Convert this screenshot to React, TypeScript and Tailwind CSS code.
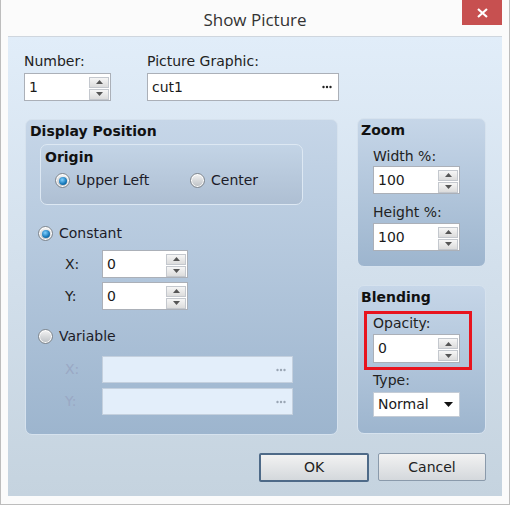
import React from "react";

const font = { fontFamily: '"DejaVu Sans", Verdana, sans-serif' };

function Dots({ disabled }: { disabled?: boolean }) {
  const c = disabled ? "#9aa6b4" : "#222";
  return (
    <svg width="10" height="4" viewBox="0 0 10 4">
      <circle cx="1.5" cy="2" r="1.2" fill={c} />
      <circle cx="5" cy="2" r="1.2" fill={c} />
      <circle cx="8.5" cy="2" r="1.2" fill={c} />
    </svg>
  );
}

function Tri({ up }: { up?: boolean }) {
  return (
    <svg width="7" height="4" viewBox="0 0 7 4">
      <path d={up ? "M0 4 L3.5 0 L7 4 Z" : "M0 0 L7 0 L3.5 4 Z"} fill="#555" />
    </svg>
  );
}

function Spin({ value, w = "w-[87px]", h = "h-[28px]" }: { value: string; w?: string; h?: string }) {
  return (
    <div className={`${w} ${h} flex items-center border border-[#abb0b8] bg-white pl-[4px] pr-[1px]`}>
      <span className="flex-1 text-[14px] text-[#1a1a1a]">{value}</span>
      <div className="flex flex-col gap-px pt-[2px]">
        <div className="w-[20px] h-[11px] flex items-center justify-center border border-[#c4c8ce] bg-gradient-to-b from-[#f6f6f6] to-[#dcdcdc]">
          <Tri up />
        </div>
        <div className="w-[20px] h-[11px] flex items-center justify-center border border-[#c4c8ce] bg-gradient-to-b from-[#f6f6f6] to-[#dcdcdc]">
          <Tri />
        </div>
      </div>
    </div>
  );
}

function Radio({ checked, label, className = "" }: { checked?: boolean; label: string; className?: string }) {
  return (
    <div className={`flex items-center gap-[6px] ${className}`}>
      <span className="w-[15px] h-[15px] rounded-full border border-[#80878e] bg-gradient-to-b from-[#f4f4f4] to-[#bcc0c4] flex items-center justify-center shadow-[inset_0_0_0_1px_#ffffff]">
        {checked && (
          <span className="w-[8px] h-[8px] rounded-full bg-[radial-gradient(circle_at_40%_35%,#7fd0ff,#1677b8_60%,#0b4f86)]" />
        )}
      </span>
      <span className="text-[14px] text-[#1c1c28]">{label}</span>
    </div>
  );
}

function Group({ title, className = "", children }: { title: string; className?: string; children?: React.ReactNode }) {
  return (
    <div className={`rounded-[7px] border border-[#d6e2ee] bg-gradient-to-b from-[#c6d6e8] to-[#9db5ce] ${className}`}>
      <div className="text-[14px] font-bold text-[#111] leading-[17px]">{title}</div>
      {children}
    </div>
  );
}

export default function App() {
  return (
    <div style={font} className="w-[510px] h-[505px] bg-[#fbfbfb] border-l border-b border-r border-[#bdbdbd] flex flex-col">
      <div className="relative h-[36px] flex items-center justify-center">
        <span style={{ fontFamily: '"Open Sans", sans-serif' }} className="text-[17px] text-[#333] pt-[4px]">
          Show Picture
        </span>
        <div className="absolute right-[7px] top-0 w-[40px] h-[25px] bg-[#c75050] flex items-center justify-center">
          <svg width="11" height="10" viewBox="0 0 11 10">
            <path d="M1 1 L10 9 M10 1 L1 9" stroke="#fff" strokeWidth="2.2" />
          </svg>
        </div>
      </div>
      <div className="ml-[7px] mr-[7px] h-[460px] border-t border-[#cfd6de] bg-gradient-to-b from-[#e1edf9] to-[#c5d3df] px-[16px] pt-[16px] flex flex-col">
        <div className="flex gap-[36px]">
          <div className="flex flex-col gap-[3px]">
            <span className="text-[14px] text-[#222] leading-[17px]">Number:</span>
            <Spin value="1" />
          </div>
          <div className="flex flex-col gap-[3px]">
            <span className="text-[14px] text-[#222] leading-[17px]">Picture Graphic:</span>
            <div className="w-[192px] h-[28px] flex items-center border border-[#abb0b8] bg-white pl-[4px] pr-[6px]">
              <span className="flex-1 text-[14px] text-[#1a1a1a]">cut1</span>
              <Dots />
            </div>
          </div>
        </div>

        <div className="flex mt-[18px] ml-px gap-[19px]">
          <Group title="Display Position" className="w-[313px] h-[316px] pl-[4px] pt-[3px]">
            <div className="ml-[10px] mt-[4px] w-[263px] h-[61px] rounded-[7px] border border-[#dde8f3] bg-gradient-to-b from-[#c3d4e6] to-[#aebfd3] pl-[4px] pt-[4px]">
              <div className="text-[14px] font-bold text-[#111] leading-[17px]">Origin</div>
              <div className="flex mt-[4px] ml-[10px]">
                <Radio checked label="Upper Left" className="w-[135px]" />
                <Radio label="Center" />
              </div>
            </div>
            <Radio checked label="Constant" className="ml-[8px] mt-[18px]" />
            <div className="flex flex-col gap-[4px] mt-[6px] ml-[35px]">
              <div className="flex items-center">
                <span className="w-[37px] text-[14px] text-[#222]">X:</span>
                <Spin value="0" w="w-[86px]" />
              </div>
              <div className="flex items-center">
                <span className="w-[37px] text-[14px] text-[#222]">Y:</span>
                <Spin value="0" w="w-[86px]" />
              </div>
            </div>
            <Radio label="Variable" className="ml-[8px] mt-[16px]" />
            <div className="flex flex-col gap-[5px] mt-[9px] ml-[35px]">
              <div className="flex items-center">
                <span className="w-[37px] text-[14px] text-[#9aa8c4]">X:</span>
                <div className="w-[191px] h-[27px] flex items-center justify-end border border-[#c4d0de] bg-[#e3eefa] pr-[6px]">
                  <Dots disabled />
                </div>
              </div>
              <div className="flex items-center">
                <span className="w-[37px] text-[14px] text-[#9aa8c4]">Y:</span>
                <div className="w-[191px] h-[27px] flex items-center justify-end border border-[#c4d0de] bg-[#e3eefa] pr-[6px]">
                  <Dots disabled />
                </div>
              </div>
            </div>
          </Group>

          <div className="flex flex-col gap-[18px] -mt-px">
            <Group title="Zoom" className="w-[129px] h-[149px] pl-[3px] pt-[3px]">
              <div className="ml-[12px] mt-[9px] flex flex-col">
                <span className="text-[14px] text-[#222] leading-[17px]">Width %:</span>
                <div className="mt-[1px]">
                  <Spin value="100" />
                </div>
                <span className="text-[14px] text-[#222] leading-[17px] mt-[10px]">Height %:</span>
                <div className="mt-[2px]">
                  <Spin value="100" />
                </div>
              </div>
            </Group>
            <Group title="Blending" className="w-[129px] h-[149px] pl-[3px] pt-[3px]">
              <div className="ml-[3px] mt-[5px] w-[108px] h-[59px] border-[3px] border-[#e8141e] pl-[6px] pt-[1px]">
                <span className="text-[14px] text-[#222] leading-[17px] block">Opacity:</span>
                <div className="mt-[2px]">
                  <Spin value="0" h="h-[29px]" />
                </div>
              </div>
              <div className="ml-[12px] mt-[2px] flex flex-col">
                <span className="text-[14px] text-[#222] leading-[17px]">Type:</span>
                <div className="mt-[3px] w-[87px] h-[25px] flex items-center border border-[#c4ccd6] bg-white pl-[4px] pr-[6px]">
                  <span className="flex-1 text-[14px] text-[#1a1a1a]">Normal</span>
                  <svg width="9" height="5" viewBox="0 0 9 5">
                    <path d="M0 0 L9 0 L4.5 5 Z" fill="#111" />
                  </svg>
                </div>
              </div>
            </Group>
          </div>
        </div>

        <div className="flex justify-end gap-[9px] mt-[18px]">
          <button className="w-[110px] h-[29px] border-2 border-[#4e6a88] rounded-[2px] bg-gradient-to-b from-[#f2f2f2] to-[#d4d8dc] text-[14px] text-[#222]">
            OK
          </button>
          <button className="w-[108px] h-[28px] border border-[#8a9aab] rounded-[2px] bg-gradient-to-b from-[#f2f2f2] to-[#d4d8dc] text-[14px] text-[#222]">
            Cancel
          </button>
        </div>
      </div>
    </div>
  );
}
